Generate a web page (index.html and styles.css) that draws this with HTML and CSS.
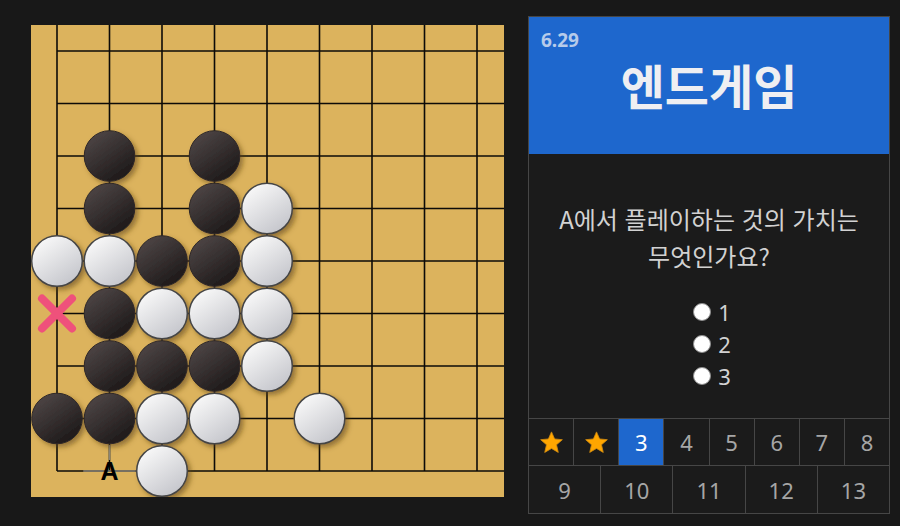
FILE: index.html
```html
<!DOCTYPE html>
<html lang="ko">
<head>
<meta charset="utf-8">
<title>엔드게임 6.29</title>
<link rel="stylesheet" href="styles.css">
</head>
<body>
<main class="page">
  <div class="board">
    <svg class="board-svg" width="473" height="472" viewBox="0 0 473 472" xmlns="http://www.w3.org/2000/svg">
      <defs>
        <linearGradient id="gb" x1="0.2" y1="0.1" x2="0.8" y2="0.95">
          <stop offset="0" stop-color="#4b4343"/>
          <stop offset="1" stop-color="#1c1818"/>
        </linearGradient>
        <linearGradient id="gw" x1="0.2" y1="0.1" x2="0.8" y2="0.95">
          <stop offset="0" stop-color="#f7f7f7"/>
          <stop offset="1" stop-color="#c4c5cb"/>
        </linearGradient>
        <filter id="sh" x="-30%" y="-30%" width="170%" height="170%">
          <feDropShadow dx="3" dy="3" stdDeviation="2.5" flood-color="#5a3d08" flood-opacity="0.55"/>
        </filter>
      </defs>
      <g class="grid">
        <line x1="26" y1="0" x2="26" y2="446"/>
        <line x1="78.5" y1="0" x2="78.5" y2="446"/>
        <line x1="131" y1="0" x2="131" y2="446"/>
        <line x1="183.5" y1="0" x2="183.5" y2="446"/>
        <line x1="236" y1="0" x2="236" y2="446"/>
        <line x1="288.5" y1="0" x2="288.5" y2="446"/>
        <line x1="341" y1="0" x2="341" y2="446"/>
        <line x1="393.5" y1="0" x2="393.5" y2="446"/>
        <line x1="446" y1="0" x2="446" y2="446"/>
        <line x1="26" y1="26" x2="473" y2="26"/>
        <line x1="26" y1="78.5" x2="473" y2="78.5"/>
        <line x1="26" y1="131" x2="473" y2="131"/>
        <line x1="26" y1="183.5" x2="473" y2="183.5"/>
        <line x1="26" y1="236" x2="473" y2="236"/>
        <line x1="26" y1="288.5" x2="473" y2="288.5"/>
        <line x1="26" y1="341" x2="473" y2="341"/>
        <line x1="26" y1="393.5" x2="473" y2="393.5"/>
        <line x1="26" y1="446" x2="473" y2="446"/>
      </g>
      <g class="label-lines">
        <line x1="78.5" y1="420" x2="78.5" y2="435"/>
        <line x1="52.25" y1="446" x2="104.75" y2="446"/>
      </g>
      <g class="stones" filter="url(#sh)">
        <circle class="b" cx="78.5" cy="131" r="25.3"/>
        <circle class="b" cx="183.5" cy="131" r="25.3"/>
        <circle class="b" cx="78.5" cy="183.5" r="25.3"/>
        <circle class="b" cx="183.5" cy="183.5" r="25.3"/>
        <circle class="w" cx="236" cy="183.5" r="25.3"/>
        <circle class="w" cx="26" cy="236" r="25.3"/>
        <circle class="w" cx="78.5" cy="236" r="25.3"/>
        <circle class="b" cx="131" cy="236" r="25.3"/>
        <circle class="b" cx="183.5" cy="236" r="25.3"/>
        <circle class="w" cx="236" cy="236" r="25.3"/>
        <circle class="b" cx="78.5" cy="288.5" r="25.3"/>
        <circle class="w" cx="131" cy="288.5" r="25.3"/>
        <circle class="w" cx="183.5" cy="288.5" r="25.3"/>
        <circle class="w" cx="236" cy="288.5" r="25.3"/>
        <circle class="b" cx="78.5" cy="341" r="25.3"/>
        <circle class="b" cx="131" cy="341" r="25.3"/>
        <circle class="b" cx="183.5" cy="341" r="25.3"/>
        <circle class="w" cx="236" cy="341" r="25.3"/>
        <circle class="b" cx="26" cy="393.5" r="25.3"/>
        <circle class="b" cx="78.5" cy="393.5" r="25.3"/>
        <circle class="w" cx="131" cy="393.5" r="25.3"/>
        <circle class="w" cx="183.5" cy="393.5" r="25.3"/>
        <circle class="w" cx="288.5" cy="393.5" r="25.3"/>
        <circle class="w" cx="131" cy="446" r="25.3"/>
      </g>
      <g class="mark-x">
        <line x1="11" y1="273.5" x2="41" y2="303.5"/>
        <line x1="41" y1="273.5" x2="11" y2="303.5"/>
      </g>
      <text class="point-label" x="78.5" y="455">A</text>
    </svg>
  </div>

  <section class="panel">
    <header class="panel-head">
      <div class="level">6.29</div>
      <h1 class="title">엔드게임</h1>
    </header>
    <div class="question">
      <p class="prompt">A에서 플레이하는 것의 가치는<br>무엇인가요?</p>
      <ul class="choices">
        <li class="choice"><span class="radio"></span><span class="choice-text">1</span></li>
        <li class="choice"><span class="radio"></span><span class="choice-text">2</span></li>
        <li class="choice"><span class="radio"></span><span class="choice-text">3</span></li>
      </ul>
    </div>
    <nav class="progress">
      <div class="row row-8">
        <div class="cell done"><svg class="star" viewBox="0 0 24 24" width="25" height="25"><polygon points="12,1.8 15,8.6 22.4,9.3 16.8,14.2 18.5,21.5 12,17.7 5.5,21.5 7.2,14.2 1.6,9.3 9,8.6"/></svg></div>
        <div class="cell done"><svg class="star" viewBox="0 0 24 24" width="25" height="25"><polygon points="12,1.8 15,8.6 22.4,9.3 16.8,14.2 18.5,21.5 12,17.7 5.5,21.5 7.2,14.2 1.6,9.3 9,8.6"/></svg></div>
        <div class="cell current">3</div>
        <div class="cell">4</div>
        <div class="cell">5</div>
        <div class="cell">6</div>
        <div class="cell">7</div>
        <div class="cell">8</div>
      </div>
      <div class="row row-5">
        <div class="cell">9</div>
        <div class="cell">10</div>
        <div class="cell">11</div>
        <div class="cell">12</div>
        <div class="cell">13</div>
      </div>
    </nav>
  </section>
</main>
</body>
</html>
```

FILE: styles.css
```css
* { box-sizing: border-box; }

html, body {
  margin: 0;
  padding: 0;
  background: #181818;
}

body {
  font-family: "Noto Sans", "Noto Sans CJK KR", sans-serif;
  width: 900px;
  height: 526px;
  overflow: hidden;
}

.page {
  display: flex;
  align-items: flex-start;
  gap: 24px;
  padding: 16px 0 0 31px;
}

/* ---------- board ---------- */
.board {
  margin-top: 9px;
  width: 473px;
  height: 472px;
  background: #dcb35d;
  flex: none;
}

.board-svg { display: block; }

.grid line {
  stroke: #0d0b08;
  stroke-width: 1.6;
}

.label-lines line {
  stroke: #8a8578;
  stroke-width: 1.6;
}

.stones .b {
  fill: url(#gb);
  stroke: #2e2828;
  stroke-width: 1;
}

.stones .w {
  fill: url(#gw);
  stroke: #454545;
  stroke-width: 1.5;
}

.mark-x line {
  stroke: #ef517b;
  stroke-width: 8;
  stroke-linecap: round;
}

.point-label {
  font-family: "Liberation Sans", Arial, sans-serif;
  font-weight: 700;
  font-size: 25px;
  text-anchor: middle;
  fill: #000;
}

/* ---------- panel ---------- */
.panel {
  width: 362px;
  height: 498px;
  border: 1px solid #464646;
  background: #1b1b1b;
  display: flex;
  flex-direction: column;
  flex: none;
}

.panel-head {
  height: 137px;
  background: #1e67cd;
  padding: 12px 12px 0;
  flex: none;
}

.level {
  font-family: "Noto Sans", sans-serif;
  font-weight: 700;
  font-size: 19px;
  line-height: 22px;
  color: #b6cbea;
}

.title {
  margin: 4px 0 0;
  text-align: center;
  font-family: "Noto Sans CJK KR", sans-serif;
  font-weight: 700;
  font-size: 48px;
  line-height: 58px;
  color: #efeff2;
}

.question {
  height: 264px;
  flex: none;
  padding-top: 46px;
  text-align: center;
}

.prompt {
  margin: 0;
  font-family: "Noto Sans CJK KR", sans-serif;
  font-size: 24px;
  line-height: 37px;
  color: #d2d2d2;
}

.choices {
  list-style: none;
  margin: 22px 0 0;
  padding: 0 0 0 6px;
  display: flex;
  flex-direction: column;
  align-items: center;
}

.choice {
  height: 32px;
  display: flex;
  align-items: center;
  gap: 7px;
  font-size: 22px;
  color: #d2d2d2;
}

.radio {
  width: 18px;
  height: 18px;
  border-radius: 50%;
  background: #ffffff;
  border: 1px solid #8c8c8c;
}

.choice-text { line-height: 32px; }

/* ---------- progress ---------- */
.progress {
  flex: 1;
  display: flex;
  flex-direction: column;
  gap: 1px;
  padding-top: 1px;
  background: #464646;
}

.row {
  display: grid;
  gap: 1px;
}

.row-8 {
  grid-template-columns: repeat(8, 1fr);
  height: 46px;
}

.row-5 {
  grid-template-columns: repeat(5, 1fr);
  flex: 1;
}

.cell {
  background: #1b1b1b;
  display: flex;
  align-items: center;
  justify-content: center;
  font-size: 22px;
  color: #a6a6a6;
}

.cell.current {
  background: #1e67cd;
  color: #ffffff;
}

.star polygon {
  fill: #ffa600;
  stroke: #d08a10;
  stroke-width: 0.8;
  stroke-linejoin: round;
}
```
